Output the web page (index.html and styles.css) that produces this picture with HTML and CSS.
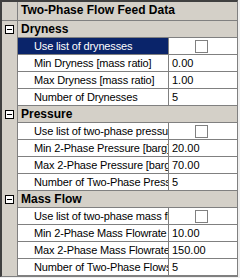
FILE: index.html
```html
<!DOCTYPE html>
<html lang="en">
<head>
  <meta charset="UTF-8">
  <title>Two-Phase Flow Feed Data</title>
  <link rel="stylesheet" href="styles.css">
</head>
<body>
  <div class="grid">
    <div class="row title-row">
      <div class="gutter"></div>
      <div class="title">Two-Phase Flow Feed Data</div>
    </div>

    <div class="row cat-row">
      <div class="gutter"><span class="toggle"></span></div>
      <div class="cat">Dryness</div>
    </div>
    <div class="row">
      <div class="gutter"></div>
      <div class="label selected">Use list of drynesses</div>
      <div class="value"><span class="check"></span></div>
    </div>
    <div class="row">
      <div class="gutter"></div>
      <div class="label">Min Dryness [mass ratio]</div>
      <div class="value">0.00</div>
    </div>
    <div class="row">
      <div class="gutter"></div>
      <div class="label">Max Dryness [mass ratio]</div>
      <div class="value">1.00</div>
    </div>
    <div class="row">
      <div class="gutter"></div>
      <div class="label">Number of Drynesses</div>
      <div class="value">5</div>
    </div>

    <div class="row cat-row">
      <div class="gutter"><span class="toggle"></span></div>
      <div class="cat">Pressure</div>
    </div>
    <div class="row">
      <div class="gutter"></div>
      <div class="label">Use list of two-phase pressures</div>
      <div class="value"><span class="check"></span></div>
    </div>
    <div class="row">
      <div class="gutter"></div>
      <div class="label">Min 2-Phase Pressure [barg]</div>
      <div class="value">20.00</div>
    </div>
    <div class="row">
      <div class="gutter"></div>
      <div class="label">Max 2-Phase Pressure [barg]</div>
      <div class="value">70.00</div>
    </div>
    <div class="row">
      <div class="gutter"></div>
      <div class="label">Number of Two-Phase Pressures</div>
      <div class="value">5</div>
    </div>

    <div class="row cat-row">
      <div class="gutter"><span class="toggle"></span></div>
      <div class="cat">Mass Flow</div>
    </div>
    <div class="row">
      <div class="gutter"></div>
      <div class="label">Use list of two-phase mass flowrates</div>
      <div class="value"><span class="check"></span></div>
    </div>
    <div class="row">
      <div class="gutter"></div>
      <div class="label">Min 2-Phase Mass Flowrate</div>
      <div class="value">10.00</div>
    </div>
    <div class="row">
      <div class="gutter"></div>
      <div class="label">Max 2-Phase Mass Flowrate</div>
      <div class="value">150.00</div>
    </div>
    <div class="row">
      <div class="gutter"></div>
      <div class="label">Number of Two-Phase Flows</div>
      <div class="value">5</div>
    </div>
  </div>
</body>
</html>
```

FILE: styles.css
```css
body {
  margin: 0;
  background: #f0f0f0;
  font-family: 'Liberation Sans', Arial, sans-serif;
  font-size: 11px;
  color: #000;
}
.grid {
  width: 235px;
  border-left: 2px solid #404040;
  border-top: 2px solid #404040;
  border-right: 1px solid #808080;
  border-bottom: 1px solid #808080;
  background: #d4d0c8;
}
.row {
  display: flex;
  height: 17px;
}
.gutter {
  width: 15px;
  flex: none;
  border-right: 1px solid #808080;
  display: flex;
  align-items: center;
  justify-content: center;
}
.title-row {
  height: 18px;
  border-bottom: 1px solid #808080;
}
.title, .cat {
  flex: 1;
  padding-left: 3px;
  font-size: 12px;
  font-weight: bold;
  line-height: 17px;
  border-bottom: 1px solid #808080;
}
.title {
  border-bottom: none;
}
.toggle {
  position: relative;
  width: 7px;
  height: 7px;
  border: 1px solid #000;
  background: #fff;
}
.toggle::after {
  content: '';
  position: absolute;
  left: 1px;
  top: 3px;
  width: 5px;
  height: 1px;
  background: #000;
}
.label {
  width: 134px;
  flex: none;
  padding-left: 16px;
  background: #fff;
  border-right: 1px solid #808080;
  border-bottom: 1px solid #808080;
  white-space: nowrap;
  overflow: hidden;
  text-overflow: clip;
  line-height: 16px;
  letter-spacing: -0.15px;
}
.label.selected {
  background: #0a246a;
  color: #fff;
}
.value {
  flex: 1;
  padding-left: 3px;
  background: #fff;
  border-bottom: 1px solid #808080;
  line-height: 16px;
  white-space: nowrap;
}
.check {
  display: block;
  width: 11px;
  height: 11px;
  margin: 2px 0 0 23px;
  border: 1px solid #808080;
  background: #fff;
}
```
